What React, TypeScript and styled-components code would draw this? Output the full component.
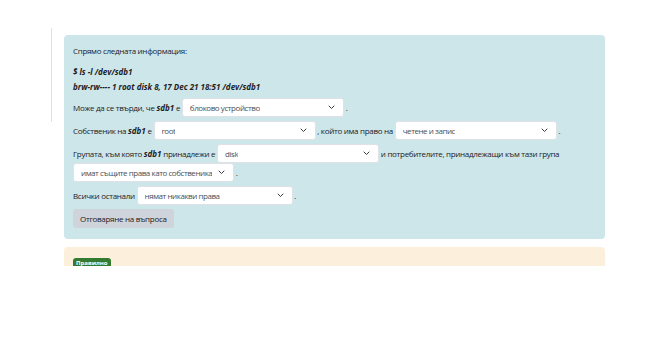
import React from "react";
import styled, { createGlobalStyle } from "styled-components";

const GlobalStyle = createGlobalStyle`
    body {
        margin: 0;
        background: #ffffff;
        font-family: "Open Sans", "Liberation Sans", sans-serif;
        color: #1d2125;
    }
`;

const Chevron = () => (
    <svg width="7" height="5" viewBox="0 0 7 5" fill="none">
        <path d="M1 1l2.5 2.5L6 1" stroke="#343a40" strokeWidth="1" strokeLinecap="round" strokeLinejoin="round" />
    </svg>
);

interface SelectProps {
    value: string;
    width: number;
}

const Select: React.FC<SelectProps> = ({ value, width }) => (
    <SelectBox style={{ width }}>
        <SelectText>{value}</SelectText>
        <Chevron />
    </SelectBox>
);

const App: React.FC = () => {
    return (
        <Page>
            <GlobalStyle />
            <Question>
                <Info />
                <Content>
                    <Formulation>
                        <Line>Спрямо следната информация:</Line>
                        <Code>$ ls -l /dev/sdb1</Code>
                        <Code>brw-rw---- 1 root disk 8, 17 Dec 21 18:51 /dev/sdb1</Code>
                        <Para>
                            Може да се твърди, че <b>sdb1</b> е <Select value="блоково устройство" width={162} /> .
                        </Para>
                        <Para>
                            Собственик на <b>sdb1</b> е <Select value="root" width={162} /> , който има право на{" "}
                            <Select value="четене и запис" width={162} /> .
                        </Para>
                        <Para>
                            Групата, към която <b>sdb1</b> принадлежи е <Select value="disk" width={162} /> и
                            потребителите, принадлежащи към тази група{" "}
                            <Select value="имат същите права като собственика" width={161} /> .
                        </Para>
                        <Para>
                            Всички останали <Select value="нямат никакви права" width={156} /> .
                        </Para>
                        <SubmitButton>Отговаряне на въпроса</SubmitButton>
                    </Formulation>
                    <Outcome>
                        <Badge>Правилно</Badge>
                    </Outcome>
                </Content>
            </Question>
        </Page>
    );
};

export default App;

const Page = styled.div`
    width: 662px;
    height: 344px;
    overflow: hidden;
    background: #fff;
`;

const Question = styled.div`
    display: flex;
    align-items: flex-start;
    padding-top: 28px;
`;

const Info = styled.div`
    width: 51px;
    height: 94px;
    border-right: 1px solid #dee2e6;
    flex-shrink: 0;
`;

const Content = styled.div`
    width: 541px;
    margin-left: 12px;
    margin-top: 7px;
    display: flex;
    flex-direction: column;
    gap: 8px;
`;

const Formulation = styled.div`
    background: #cde6ea;
    border-radius: 4px;
    padding: 9px 9px 11px 9px;
    font-size: 8px;
    line-height: 14px;
    letter-spacing: -0.3px;
`;

const Line = styled.div`
    margin-bottom: 7px;
`;

const Code = styled.div`
    font-weight: 700;
    font-style: italic;
    letter-spacing: 0;
    margin-bottom: 1px;
`;

const Para = styled.div`
    line-height: 19px;
    margin-top: 4px;

    b {
        font-weight: 700;
        font-style: italic;
        letter-spacing: 0;
    }
`;

const SelectBox = styled.span`
    display: inline-flex;
    align-items: center;
    justify-content: space-between;
    gap: 4px;
    vertical-align: top;
    box-sizing: border-box;
    height: 19px;
    padding: 0 8px 0 7px;
    background: #fff;
    border: 1px solid #dee2e6;
    border-radius: 3px;
    color: #495057;
    line-height: 17px;
    white-space: nowrap;

    svg {
        flex-shrink: 0;
    }
`;

const SelectText = styled.span`
    overflow: hidden;
    letter-spacing: -0.45px;
`;

const SubmitButton = styled.button`
    display: block;
    margin-top: 4px;
    height: 19px;
    padding: 0 7px;
    border: none;
    border-radius: 3px;
    background: #ced4da;
    color: #1d2125;
    font-family: "Open Sans", "Liberation Sans", sans-serif;
    font-size: 8px;
    letter-spacing: -0.3px;
`;

const Outcome = styled.div`
    display: flex;
    align-items: flex-start;
    height: 19px;
    overflow: hidden;
    background: #fcefdc;
    border-radius: 4px 4px 0 0;
    padding: 11px 9px 0;
    box-sizing: border-box;
`;

const Badge = styled.span`
    display: inline-block;
    padding: 1px 3px;
    border-radius: 3px;
    background: #357a32;
    color: #fff;
    font-size: 6px;
    font-weight: 700;
    line-height: 8px;
`;
